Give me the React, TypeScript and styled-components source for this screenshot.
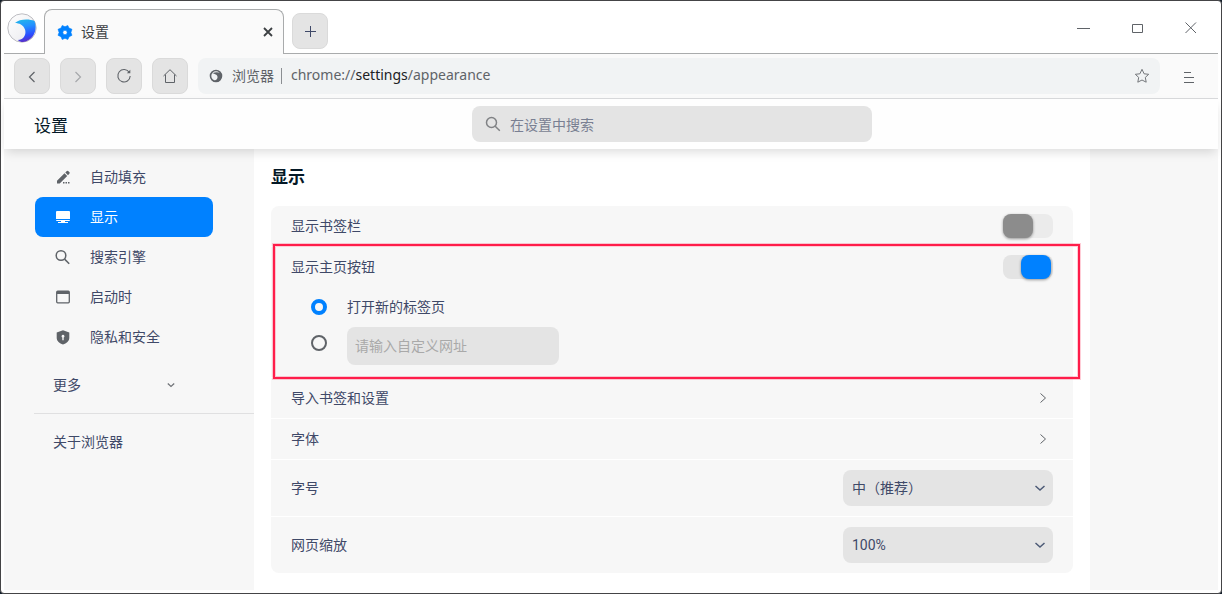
import React, { useState } from "react";
import styled, { createGlobalStyle, css } from "styled-components";

const ink = "#3f4968";
const dark = "#041826";
const iconGray = "#5f6368";
const control = "#e4e4e4";
const panel = "#f7f7f7";
const blue = "#0081ff";
const cjkFirst = `"Noto Sans CJK SC", "Noto Sans", sans-serif`;

const GlobalStyle = createGlobalStyle`
  *, *::before, *::after { box-sizing: border-box; }
  body {
    margin: 0;
    background: #141f2b;
    color: ${ink};
    font: 14px/20px Roboto, "Noto Sans CJK SC", sans-serif;
  }
  button, input, select { font: inherit; color: inherit; margin: 0; }
  button { border: 0; padding: 0; background: none; cursor: pointer; text-align: left; }
  svg { display: block; flex: none; }
`;

const Window = styled.div`
  display: flex;
  flex-direction: column;
  min-height: 100vh;
  padding: 0 3px 3px;
  border: 1px solid #444446;
  border-radius: 4px;
  background: #fff;
`;

const TitleBar = styled.div`
  display: flex;
  align-items: flex-end;
  height: 53px;
  border-bottom: 1px solid #a9abac;
`;

const Brand = styled.div`
  width: 40px;
  align-self: center;
  padding: 2px 0 0 3px;
`;

const Tab = styled.div`
  display: flex;
  align-items: center;
  gap: 8px;
  width: 240px;
  height: 45px;
  margin-bottom: -1px;
  padding: 0 7px 0 12px;
  border: 1px solid #a9abac;
  border-bottom: 0;
  border-radius: 8px 8px 0 0;
  background: #fafafa;
  color: #3c4043;
`;

const TabTitle = styled.span`
  flex: 1;
`;

const TabClose = styled.button`
  display: grid;
  place-items: center;
  width: 16px;
  height: 16px;
`;

const ToolButton = styled.button`
  display: grid;
  place-items: center;
  flex: none;
  width: 36px;
  height: 36px;
  border: 1px solid #dadada;
  border-radius: 8px;
  background: ${control};
`;

const NewTab = styled(ToolButton)`
  margin: 0 0 4px 8px;
`;

const WindowControls = styled.div`
  display: flex;
  align-self: stretch;
  margin-left: auto;
`;

const WindowControl = styled.button`
  display: grid;
  place-items: center;
  width: 54px;
`;

const Toolbar = styled.div`
  display: flex;
  align-items: center;
  gap: 10px;
  height: 45px;
  padding: 0 10px;
  border-bottom: 1px solid #d9dadc;
  background: #fafafa;
`;

const Omnibox = styled.div`
  display: flex;
  align-items: center;
  flex: 1;
  height: 36px;
  padding: 0 9px 0 11px;
  border-radius: 8px;
  background: #f1f3f4;
  color: ${iconGray};
`;

const SiteName = styled.span`
  margin-left: 9px;
  padding-right: 7px;
`;

const SiteRule = styled.span`
  width: 1px;
  height: 16px;
  margin-right: 9px;
  background: #8b8e92;
`;

const Address = styled.div`
  flex: 1;
  padding-bottom: 2px;
  outline: 0;
  font-family: "Noto Sans", sans-serif;

  strong { font-weight: 400; color: #202124; }
`;

const PlainIconButton = styled.button`
  display: grid;
  place-items: center;
  width: 18px;
  height: 18px;
`;

const MenuButton = styled(PlainIconButton)`
  width: 38px;
  height: 36px;
`;

const columns = css`
  display: grid;
  grid-template-columns: 250px minmax(0, 1fr) 128px;
`;

const NavButtons = styled.div`
  display: flex;
  gap: 10px;
`;

const Header = styled.header`
  ${columns}
  position: relative;
  z-index: 1;
  align-items: center;
  height: 50px;
  background: #fefefe;
  box-shadow: 0 5px 10px -2px rgba(0, 0, 0, 0.14);
  font-family: ${cjkFirst};
`;

const HeaderTitle = styled.h1`
  margin: 0;
  padding: 2px 0 0 30px;
  font-size: 17px;
  line-height: 24px;
  font-weight: 400;
  color: ${dark};
`;

const SearchBox = styled.label`
  display: flex;
  align-items: center;
  gap: 8px;
  justify-self: center;
  width: 400px;
  max-width: 100%;
  height: 36px;
  padding: 0 12px;
  border-radius: 8px;
  background: ${control};
`;

const SearchInput = styled.input`
  flex: 1;
  min-width: 0;
  padding: 0;
  border: 0;
  outline: 0;
  background: none;

  &::placeholder { color: #797f92; opacity: 1; }
`;

const Body = styled.div`
  ${columns}
  flex: 1;
  background: ${panel};
`;

const Sidebar = styled.nav`
  padding-top: 8px;
`;

const NavItem = styled.a<{ $active?: boolean }>`
  display: flex;
  align-items: center;
  gap: 19px;
  height: 40px;
  margin: 0 41px 0 31px;
  padding-left: 20px;
  border-radius: 8px;
  text-decoration: none;
  background: ${(p) => (p.$active ? blue : "transparent")};
  color: ${(p) => (p.$active ? "#fff" : ink)};

  svg { color: ${(p) => (p.$active ? "#fff" : iconGray)}; }
`;

const MoreButton = styled.button`
  display: flex;
  align-items: center;
  justify-content: space-between;
  width: 123px;
  height: 48px;
  margin: 4px 0 4px 49px;

  svg { color: #707378; }
`;

const SideRule = styled.hr`
  height: 1px;
  margin: 0 0 4px 30px;
  border: 0;
  background: #e0e0e1;
`;

const AboutLink = styled.a`
  display: flex;
  align-items: center;
  height: 48px;
  padding-left: 49px;
  color: ${ink};
  text-decoration: none;
`;

const Main = styled.main`
  padding: 15px 17px 17px;
  background: #fff;
`;

const SectionTitle = styled.h2`
  margin: 0 0 18px;
  font-family: ${cjkFirst};
  font-size: 17px;
  line-height: 24px;
  font-weight: 700;
  color: ${dark};
`;

const Card = styled.section`
  display: grid;
  gap: 1px;

  > :first-child { border-radius: 8px 8px 0 0; }
  > :last-child { border-radius: 0 0 8px 8px; }
`;

const Row = styled.div<{ $tall?: boolean }>`
  display: flex;
  align-items: center;
  justify-content: space-between;
  width: 100%;
  height: ${(p) => (p.$tall ? 56 : 40)}px;
  padding: 0 20px;
  background: ${panel};
`;

const HomeGroup = styled.div`
  position: relative;
  padding-bottom: 12px;
  background: ${panel};
`;

const Highlight = styled.div`
  position: absolute;
  inset: -3px -7px -2px 2px;
  border: 2px solid #ff1d4a;
  box-shadow: 0 0 0 1px rgba(255, 29, 74, 0.22), inset 0 0 0 1px rgba(255, 29, 74, 0.22);
  pointer-events: none;
`;

const Switch = styled.input`
  appearance: none;
  width: 50px;
  height: 24px;
  border-radius: 8px;
  background: #ebebeb;

  &::before {
    content: "";
    display: block;
    width: 30px;
    height: 24px;
    border-radius: 8px;
    background: #8c8c8c;
    box-shadow: 0 1px 3px rgba(0, 0, 0, 0.4);
  }
  &:checked { background: ${control}; }
  &:checked::before { margin-left: 18px; background: ${blue}; }
`;

const Options = styled.div`
  display: grid;
  grid-template-columns: 16px 1fr;
  column-gap: 20px;
  padding-left: 40px;
`;

const OptionLabel = styled.label`
  line-height: 40px;
`;

const Radio = styled.input<{ $lead: number }>`
  appearance: none;
  width: 16px;
  height: 16px;
  margin-top: ${(p) => p.$lead}px;
  border: 2px solid ${iconGray};
  border-radius: 50%;

  &:checked { border: 4px solid ${blue}; }
`;

const UrlInput = styled.input`
  width: 212px;
  height: 38px;
  padding: 0 8px;
  border: 0;
  border-radius: 8px;
  background: ${control};

  &::placeholder { color: #a9a9a9; opacity: 1; }
`;

const SelectWrap = styled.div`
  display: grid;
  align-items: center;
  width: 210px;

  > * { grid-area: 1 / 1; }
  > svg { justify-self: end; margin-right: 6px; color: #4c5a76; pointer-events: none; }
`;

const Select = styled.select`
  appearance: none;
  height: 36px;
  padding: 0 9px;
  border: 0;
  border-radius: 8px;
  background: ${control};
`;

const stroke = { fill: "none", stroke: "currentColor" } as const;

const Logo = () => (
  <svg width="30" height="30" viewBox="0 0 30 30" aria-hidden="true">
    <defs>
      <linearGradient id="swirl" x1="0.2" y1="0" x2="0.4" y2="1">
        <stop offset="0" stopColor="#22b8ea" />
        <stop offset="0.35" stopColor="#2492ff" />
        <stop offset="0.75" stopColor="#2b4dff" />
        <stop offset="1" stopColor="#5a2fc8" />
      </linearGradient>
      <linearGradient id="pearl" x1="0" y1="0" x2="1" y2="1">
        <stop offset="0" stopColor="#fff" />
        <stop offset="1" stopColor="#e8e8ec" />
      </linearGradient>
    </defs>
    <circle cx="15" cy="15" r="14.200" fill="url(#pearl)" stroke="#bdbdc2" />
    <path d="M8 10C12 6 22 5.500 27.500 8C31 17 26 28 16 29C14 29 12 28.500 11 27C17 26.500 19.500 21 18 16.500C16.500 12 12 10 8 10Z" fill="url(#swirl)" />
  </svg>
);

const Gear = () => (
  <svg width="16" height="16" viewBox="0 0 16 16" aria-hidden="true">
    <path
      fill={blue}
      fillRule="evenodd"
      d="M5.200 1.500L8 2.700L10.800 1.500L12 4.100L15 5.300L13.900 8.500L15 11.300L12.200 12.700L10.800 15.500L8 14.300L5.200 15.500L4 12.700L1 11.300L2.100 8.500L1 5.300L4 4.100ZM8 6.300A2.200 2.200 0 1 0 8 10.700A2.200 2.200 0 1 0 8 6.300Z"
      stroke={blue}
      strokeWidth="0.6"
      strokeLinejoin="round"
    />
  </svg>
);

const Magnifier = () => (
  <svg width="18" height="18" viewBox="0 0 18 18" {...stroke} strokeWidth="1.500" aria-hidden="true">
    <circle cx="6" cy="7.500" r="4.800" />
    <path d="M9.600 11.100L14.200 15.700" />
  </svg>
);

const Globe = () => (
  <svg width="14" height="14" viewBox="0 0 14 14" aria-hidden="true">
    <circle cx="7" cy="7" r="5.500" {...stroke} strokeWidth="1.600" />
    <path d="M3.500 4.200C6 3.200 9 3 11.500 4.200C13.500 8 11.500 12 7.500 12.800C6 12.800 5.600 12.300 5.200 11.700C8.600 11 9.400 7.800 7.600 6C6.500 5 5 4.500 3.500 4.200Z" fill="currentColor" />
  </svg>
);

const ChevronDown = ({ size = 14, weight = 1.5 }: { size?: number; weight?: number }) => (
  <svg width={size} height={size} viewBox="0 0 14 14" {...stroke} strokeWidth={weight} aria-hidden="true">
    <path d="M2.500 5L7 9L11.500 5" />
  </svg>
);

const RowArrow = () => (
  <svg width="20" height="20" viewBox="0 0 20 20" color={iconGray} {...stroke} aria-hidden="true">
    <path d="M7.500 5.500L12.500 10L7.500 14.500" />
  </svg>
);

const PencilIcon = () => (
  <svg width="16" height="16" viewBox="0 0 16 16" fill="currentColor" aria-hidden="true">
    <path d="M2 14.500V11.800L9.500 4.300L12.200 7L4.700 14.500ZM10.300 3.500L11.900 1.900Q12.500 1.400 13.100 1.900L14.500 3.300Q15 3.900 14.500 4.500L13 6.200Z" />
    <path d="M8 13h1.500v1.500H8zM10.500 13H12v1.500h-1.500zM13 13h1.500v1.500H13z" />
  </svg>
);

const ScreenIcon = () => (
  <svg width="16" height="16" viewBox="0 0 16 16" fill="currentColor" aria-hidden="true">
    <path d="M2 2H14Q15 2 15 3V10H1V3Q1 2 2 2ZM1 11H15Q15 12 14 12H10V13H13V14H3V13H6V12H2Q1 12 1 11Z" />
  </svg>
);

const StartupIcon = () => (
  <svg width="16" height="16" viewBox="0 0 16 16" aria-hidden="true">
    <rect x="1.700" y="2.200" width="12.600" height="11.600" rx="1" {...stroke} strokeWidth="1.300" />
    <path d="M2 2H14V5H2Z" fill="currentColor" />
  </svg>
);

const ShieldIcon = () => (
  <svg width="16" height="16" viewBox="0 0 16 16" fill="currentColor" aria-hidden="true">
    <path
      fillRule="evenodd"
      d="M8 1.200L14.300 3.500V9C14.300 12 11.500 14.400 8 15.500C4.500 14.400 1.700 12 1.700 9V3.500ZM8 5.800A1.500 1.500 0 0 0 7.300 8.600V11.200H8.700V8.600A1.500 1.500 0 0 0 8 5.800Z"
    />
  </svg>
);

const navItems = [
  { label: "自动填充", icon: <PencilIcon /> },
  { label: "显示", icon: <ScreenIcon />, active: true },
  { label: "搜索引擎", icon: <Magnifier /> },
  { label: "启动时", icon: <StartupIcon /> },
  { label: "隐私和安全", icon: <ShieldIcon /> },
];

const NavIcon = styled.span`
  display: flex;
  width: 16px;
`;

export default function App() {
  const [bookmarks, setBookmarks] = useState(false);
  const [home, setHome] = useState(true);

  return (
    <Window>
      <GlobalStyle />
      <TitleBar>
        <Brand><Logo /></Brand>
        <Tab>
          <Gear />
          <TabTitle>设置</TabTitle>
          <TabClose aria-label="关闭标签页">
            <svg width="10" height="10" viewBox="0 0 10 10" {...stroke} strokeWidth="1.800">
              <path d="M1 1L9 9M9 1L1 9" />
            </svg>
          </TabClose>
        </Tab>
        <NewTab aria-label="新标签页">
          <svg width="12" height="12" viewBox="0 0 12 12" {...stroke} shapeRendering="crispEdges">
            <path d="M6.500 1V12M1 6.500H12" />
          </svg>
        </NewTab>
        <WindowControls>
          <WindowControl aria-label="最小化">
            <svg width="14" height="12" viewBox="0 0 14 12" color={iconGray} {...stroke}><path d="M1 7.500H14" /></svg>
          </WindowControl>
          <WindowControl aria-label="最大化">
            <svg width="12" height="12" viewBox="0 0 12 12" color={iconGray} {...stroke}><path d="M1.500 3.500H11.500V11.500H1.500Z" /></svg>
          </WindowControl>
          <WindowControl aria-label="关闭">
            <svg width="12" height="12" viewBox="0 0 12 12" color={iconGray} {...stroke}><path d="M0.500 1.500L11 12M11 1.500L0.500 12" /></svg>
          </WindowControl>
        </WindowControls>
      </TitleBar>

      <Toolbar>
        <NavButtons>
          <ToolButton aria-label="后退">
            <svg width="14" height="14" viewBox="0 0 14 14" color={iconGray} {...stroke} strokeWidth="1.200"><path d="M9.500 3L4.500 8L9.500 13" /></svg>
          </ToolButton>
          <ToolButton aria-label="前进">
            <svg width="14" height="14" viewBox="0 0 14 14" color="#a6a8ab" {...stroke} strokeWidth="1.200"><path d="M4.500 3L9.500 8L4.500 13" /></svg>
          </ToolButton>
          <ToolButton aria-label="刷新">
            <svg width="16" height="16" viewBox="0 0 16 16" color={iconGray} {...stroke} strokeWidth="1.100">
              <path d="M13.300 4.500A6.200 6.200 0 1 0 14.200 8" />
              <path d="M14.300 1.800V5.200H10.800Z" fill="currentColor" stroke="none" />
            </svg>
          </ToolButton>
          <ToolButton aria-label="主页">
            <svg width="16" height="16" viewBox="0 0 16 16" color={iconGray} {...stroke}>
              <path d="M1.500 8L8 1.700L14.500 8M3.500 6.500V14.500H12.500V6.500" />
            </svg>
          </ToolButton>
        </NavButtons>
        <Omnibox>
          <Globe />
          <SiteName>浏览器</SiteName>
          <SiteRule />
          <Address role="textbox" aria-label="地址" tabIndex={0}>
            chrome://<strong>settings</strong>/appearance
          </Address>
          <PlainIconButton aria-label="添加书签">
            <svg width="16" height="16" viewBox="0 0 16 16" color="#74777b" {...stroke}>
              <path d="M8 1.300L10.100 5.800L14.700 6.300L11.300 9.400L12.200 14.200L8 12L3.800 14.200L4.700 9.400L1.300 6.300L5.900 5.800Z" />
            </svg>
          </PlainIconButton>
        </Omnibox>
        <MenuButton aria-label="菜单">
          <svg width="12" height="14" viewBox="0 0 12 14" color={iconGray} {...stroke} shapeRendering="crispEdges">
            <path d="M1 3.500H8M1 8.500H11M1 13.500H11" />
          </svg>
        </MenuButton>
      </Toolbar>

      <Header>
        <HeaderTitle>设置</HeaderTitle>
        <SearchBox>
          <svg width="18" height="18" viewBox="0 0 18 18" color="#808285" {...stroke} strokeWidth="1.500" aria-hidden="true">
            <circle cx="7.500" cy="7.500" r="5" />
            <path d="M11.200 11.200L15.800 15.800" />
          </svg>
          <SearchInput placeholder="在设置中搜索" aria-label="在设置中搜索" />
        </SearchBox>
      </Header>

      <Body>
        <Sidebar>
          {navItems.map((item) => (
            <NavItem key={item.label} href="#" $active={item.active}>
              <NavIcon>{item.icon}</NavIcon>
              {item.label}
            </NavItem>
          ))}
          <MoreButton>更多<ChevronDown size={10} weight={1.8} /></MoreButton>
          <SideRule />
          <AboutLink href="#">关于浏览器</AboutLink>
        </Sidebar>

        <Main>
          <SectionTitle>显示</SectionTitle>
          <Card>
            <Row>
              <label htmlFor="bookmarks">显示书签栏</label>
              <Switch id="bookmarks" type="checkbox" checked={bookmarks} onChange={() => setBookmarks(!bookmarks)} />
            </Row>
            <HomeGroup>
              <Row>
                <label htmlFor="home">显示主页按钮</label>
                <Switch id="home" type="checkbox" checked={home} onChange={() => setHome(!home)} />
              </Row>
              <Options>
                <Radio id="newtab" type="radio" name="homepage" defaultChecked $lead={12} />
                <OptionLabel htmlFor="newtab">打开新的标签页</OptionLabel>
                <Radio type="radio" name="homepage" aria-label="自定义网址" $lead={8} />
                <UrlInput placeholder="请输入自定义网址" aria-label="请输入自定义网址" />
              </Options>
              <Highlight />
            </HomeGroup>
            <Row as="button">导入书签和设置<RowArrow /></Row>
            <Row as="button">字体<RowArrow /></Row>
            <Row $tall>
              <label htmlFor="size">字号</label>
              <SelectWrap>
                <Select id="size"><option>中（推荐）</option></Select>
                <ChevronDown />
              </SelectWrap>
            </Row>
            <Row $tall>
              <label htmlFor="zoom">网页缩放</label>
              <SelectWrap>
                <Select id="zoom"><option>100%</option></Select>
                <ChevronDown />
              </SelectWrap>
            </Row>
          </Card>
        </Main>
      </Body>
    </Window>
  );
}
